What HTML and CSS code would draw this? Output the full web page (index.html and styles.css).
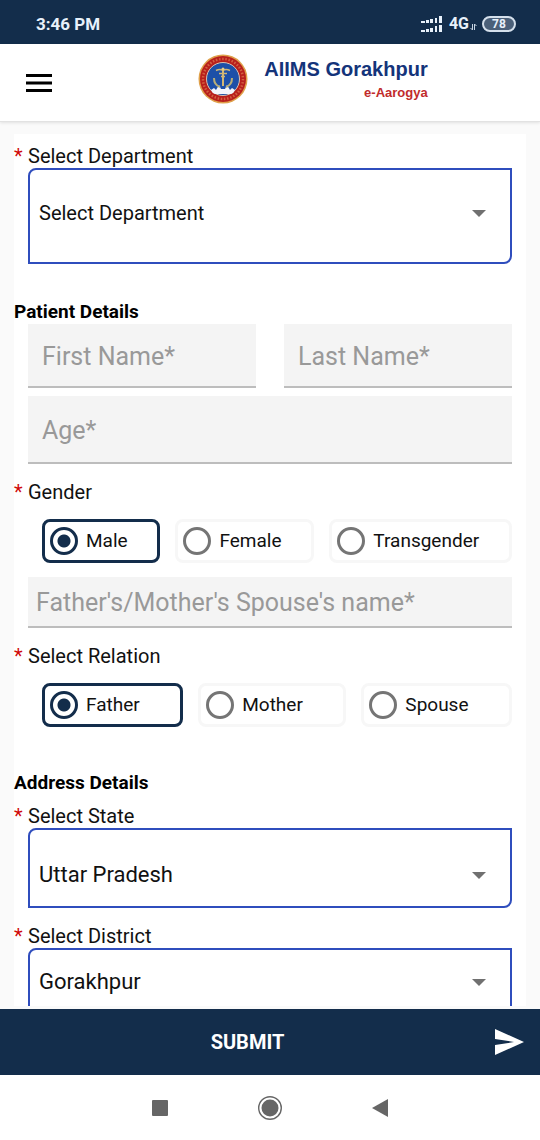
FILE: index.html
```html
<!DOCTYPE html>
<html lang="en">
<head>
    <meta charset="UTF-8">
    <meta name="viewport" content="width=device-width, initial-scale=1.0">
    <title>AIIMS Gorakhpur e-Aarogya</title>
    <link rel="stylesheet" href="styles.css">
</head>
<body>
    <div class="status-bar">
        <span class="time">3:46 PM</span>
        <svg class="signal" width="22" height="16" viewBox="0 0 22 16" fill="#e8f1fb">
            <path d="M0 5h4v2H0zM5 4h3v3H5zM9 3h3v4H9zM14 2h2v5h-2zM18 0h3v7h-3z"/>
            <path d="M0 14h4v2H0zM5 13h3v3H5zM9 12h3v4H9zM14 10h2v6h-2zM18 9h3v7h-3z"/>
        </svg>
        <span class="network">4G</span>
        <svg class="data" width="7" height="8" viewBox="0 0 7 8" fill="none" stroke="#c6d3e2">
            <path d="M2.500 1v6L0.500 5M4.500 7V1L6.500 3"/>
        </svg>
        <span class="battery">78</span>
    </div>

    <header class="header">
        <button class="menu" type="button" aria-label="Menu">
            <svg width="26" height="18" viewBox="0 0 26 18" fill="#000">
                <path d="M0 0h26v3H0zM0 7.500h26v3H0zM0 15h26v3H0z"/>
            </svg>
        </button>
        <div class="brand">
            <svg width="50" height="50" viewBox="0 0 50 50">
                <circle cx="25" cy="25" r="24.500" fill="#dfa04a"/>
                <circle cx="25" cy="25" r="23" fill="#b81f1c"/>
                <circle cx="25" cy="25" r="20" fill="none" stroke="#d2603f" stroke-width="2.500" stroke-dasharray="1.500 1.700"/>
                <circle cx="25" cy="25" r="16.500" fill="#1d50a8" stroke="#d9c3b0"/>
                <path d="M13 36l3-2 2 2 3-5 2 4h4l2-4 3 5 2-2 3 2q-1 3-4 4H17q-3-1-4-4z" fill="#f3f5fb"/>
                <path d="M25 14v18" fill="none" stroke="#d3b775" stroke-width="2"/>
                <path d="M18 16.500q4-2 7 0 3-2 7 0M21 19.500h8M23 22.500h4" fill="none" stroke="#d3b775" stroke-width="1.500"/>
                <path d="M16 24q0 7 6 9M34 24q0 7-6 9" fill="none" stroke="#b7ae78" stroke-width="2"/>
                <circle cx="25" cy="15" r="1.500" fill="#e6cf88"/>
            </svg>
            <div class="brand-text">
                <div class="brand-name">AIIMS Gorakhpur</div>
                <div class="brand-app">e-Aarogya</div>
            </div>
        </div>
    </header>

    <main class="content">
        <form class="card" id="registration">
            <label class="field-label" for="department">Select Department</label>
            <div class="select-box department">
                <select id="department">
                    <option>Select Department</option>
                </select>
            </div>

            <h2>Patient Details</h2>
            <div class="name-row">
                <input type="text" placeholder="First Name*" aria-label="First Name">
                <input type="text" placeholder="Last Name*" aria-label="Last Name">
            </div>
            <input class="age" type="text" inputmode="numeric" placeholder="Age*" aria-label="Age">

            <fieldset>
                <legend class="field-label">Gender</legend>
                <div class="choices">
                    <label class="choice"><input type="radio" name="gender" checked>Male</label>
                    <label class="choice"><input type="radio" name="gender">Female</label>
                    <label class="choice"><input type="radio" name="gender">Transgender</label>
                </div>
            </fieldset>

            <input class="guardian" type="text" placeholder="Father's/Mother's Spouse's name*" aria-label="Father's, Mother's or Spouse's name">

            <fieldset>
                <legend class="field-label">Select Relation</legend>
                <div class="choices">
                    <label class="choice"><input type="radio" name="relation" checked>Father</label>
                    <label class="choice"><input type="radio" name="relation">Mother</label>
                    <label class="choice"><input type="radio" name="relation">Spouse</label>
                </div>
            </fieldset>

            <h2 class="address-title">Address Details</h2>
            <label class="field-label" for="state">Select State</label>
            <div class="select-box state">
                <select id="state">
                    <option>Uttar Pradesh</option>
                </select>
            </div>

            <label class="field-label" for="district">Select District</label>
            <div class="select-box district">
                <select id="district">
                    <option>Gorakhpur</option>
                </select>
            </div>
        </form>
    </main>

    <button class="submit" type="submit" form="registration">
        <span>SUBMIT</span>
        <svg width="29" height="26" viewBox="0 0 29 26" fill="#fff">
            <path d="M0 0l29 13L0 26v-10l19-3L0 10z"/>
        </svg>
    </button>

    <nav class="nav-bar">
        <button type="button" aria-label="Recent apps">
            <svg width="16" height="16" viewBox="0 0 16 16"><rect width="16" height="16" rx="1" fill="#666"/></svg>
        </button>
        <button type="button" aria-label="Home">
            <svg width="24" height="24" viewBox="0 0 24 24">
                <circle cx="12" cy="12" r="11.300" fill="none" stroke="#666" stroke-width="1.400"/>
                <circle cx="12" cy="12" r="8.500" fill="#666"/>
            </svg>
        </button>
        <button type="button" aria-label="Back">
            <svg width="16" height="18" viewBox="0 0 16 18"><path d="M16 0v18L0 9z" fill="#666"/></svg>
        </button>
    </nav>
</body>
</html>
```
FILE: styles.css
```css
* {
    box-sizing: border-box;
}
body {
    font-family: Roboto, sans-serif;
    font-size: 19px;
    line-height: 24px;
    color: #111;
    background-color: #fafafa;
    display: flex;
    flex-direction: column;
    height: 100vh;
    margin: 0;
}
button {
    border: none;
    padding: 0;
    background: none;
    font: inherit;
    cursor: pointer;
}
svg {
    display: block;
}

/* phone status bar */
.status-bar {
    display: flex;
    align-items: center;
    height: 44px;
    padding: 4px 24px 0 36px;
    background-color: #132d4b;
    color: #e8f1fb;
    flex-shrink: 0;
}
.time {
    flex: 1;
    font-size: 17px;
    font-weight: 700;
}
.network {
    margin-left: 6px;
    font-size: 16px;
    font-weight: 700;
}
.data {
    margin: 6px 5px 0 1px;
}
.battery {
    width: 34px;
    border: 2px solid #d5e0ec;
    border-radius: 8px;
    background-color: #4b6079;
    font-size: 12px;
    font-weight: 700;
    line-height: 12px;
    text-align: center;
}

/* header */
.header {
    display: flex;
    align-items: center;
    height: 78px;
    background-color: #fff;
    border-bottom: 1px solid #e2e2e2;
    box-shadow: 0 1px 3px rgba(0, 0, 0, 0.1);
    flex-shrink: 0;
}
.menu {
    width: 86px;
    padding-left: 26px;
}
.brand {
    flex: 1;
    display: flex;
    justify-content: center;
    gap: 16px;
    padding-bottom: 6px;
}
.brand-text {
    font-family: "Liberation Sans", Arial, sans-serif;
    font-weight: 700;
    text-align: right;
}
.brand-name {
    margin-top: 3px;
    font-size: 20px;
    color: #14347a;
}
.brand-app {
    font-size: 13px;
    color: #c12b2b;
}

/* form */
.content {
    flex: 1;
    min-height: 0;
    margin-bottom: 3px;
    padding: 12px 14px 0;
    overflow: hidden;
}
.card {
    padding: 10px 14px 14px;
    background-color: #fff;
}
.card h2 {
    margin: 36px 0 0 -14px;
    font-size: 19px;
    font-weight: 700;
    line-height: 24px;
    color: #000;
}
.card .address-title {
    margin-top: 44px;
    margin-bottom: 9px;
}
.field-label {
    display: block;
    margin-left: -14px;
    padding: 0;
    font-size: 20px;
}
.field-label::before {
    content: "*";
    display: inline-block;
    width: 14px;
    color: #d00a0a;
}
.select-box {
    display: flex;
    align-items: center;
    padding: 0 24px 0 9px;
    border: 2px solid #2f4dbd;
    border-radius: 8px 0;
    font-size: 22px;
}
.select-box::after {
    content: "";
    border: 7px solid transparent;
    border-top-color: #707070;
    border-bottom: none;
}
.select-box select {
    flex: 1;
    border: none;
    padding: 0;
    appearance: none;
    background: none;
    font: inherit;
    color: #111;
}
.department {
    height: 96px;
    padding-bottom: 6px;
    font-size: 20px;
}
.state {
    height: 80px;
    margin-bottom: 16px;
    padding-top: 14px;
}
.district {
    height: 68px;
}
input[type="text"] {
    display: block;
    width: 100%;
    min-width: 0;
    height: 64px;
    padding: 2px 14px 0;
    border: none;
    border-bottom: 2px solid #bdbdbd;
    background-color: #f4f4f4;
    font: inherit;
    font-size: 25px;
}
input::placeholder {
    color: #999;
}
.name-row {
    display: flex;
    gap: 28px;
}
input.age {
    height: 68px;
    margin: 8px 0 16px;
}
input.guardian {
    height: 51px;
    margin: 14px 0 16px;
    padding: 2px 8px 0;
}
fieldset {
    min-width: 0;
    margin: 0;
    padding: 0;
    border: none;
}
.choices {
    display: flex;
    gap: 15px;
    padding: 15px 0 0 14px;
}
.choice {
    flex: 1 1 auto;
    display: flex;
    align-items: center;
    gap: 8px;
    height: 44px;
    padding: 0 5px;
    border: 3px solid #f7f7f7;
    border-radius: 8px;
}
.choice:has(input:checked) {
    border-color: #132d4b;
}
.choice input {
    appearance: none;
    width: 28px;
    height: 28px;
    margin: 0;
    border: 3px solid #757575;
    border-radius: 50%;
}
.choice input:checked {
    border-color: #132d4b;
    background: radial-gradient(circle, #132d4b 6px, transparent 7px);
}

/* bottom bars */
.submit {
    display: flex;
    align-items: center;
    height: 66px;
    padding-right: 16px;
    background-color: #132d4b;
    color: #fff;
    font-size: 20px;
    font-weight: 700;
    flex-shrink: 0;
}
.submit span {
    flex: 1;
}
.nav-bar {
    display: flex;
    align-items: center;
    justify-content: center;
    gap: 86px;
    height: 65px;
    background-color: #fff;
    flex-shrink: 0;
}
.nav-bar button {
    display: flex;
    justify-content: center;
    width: 24px;
}
```
